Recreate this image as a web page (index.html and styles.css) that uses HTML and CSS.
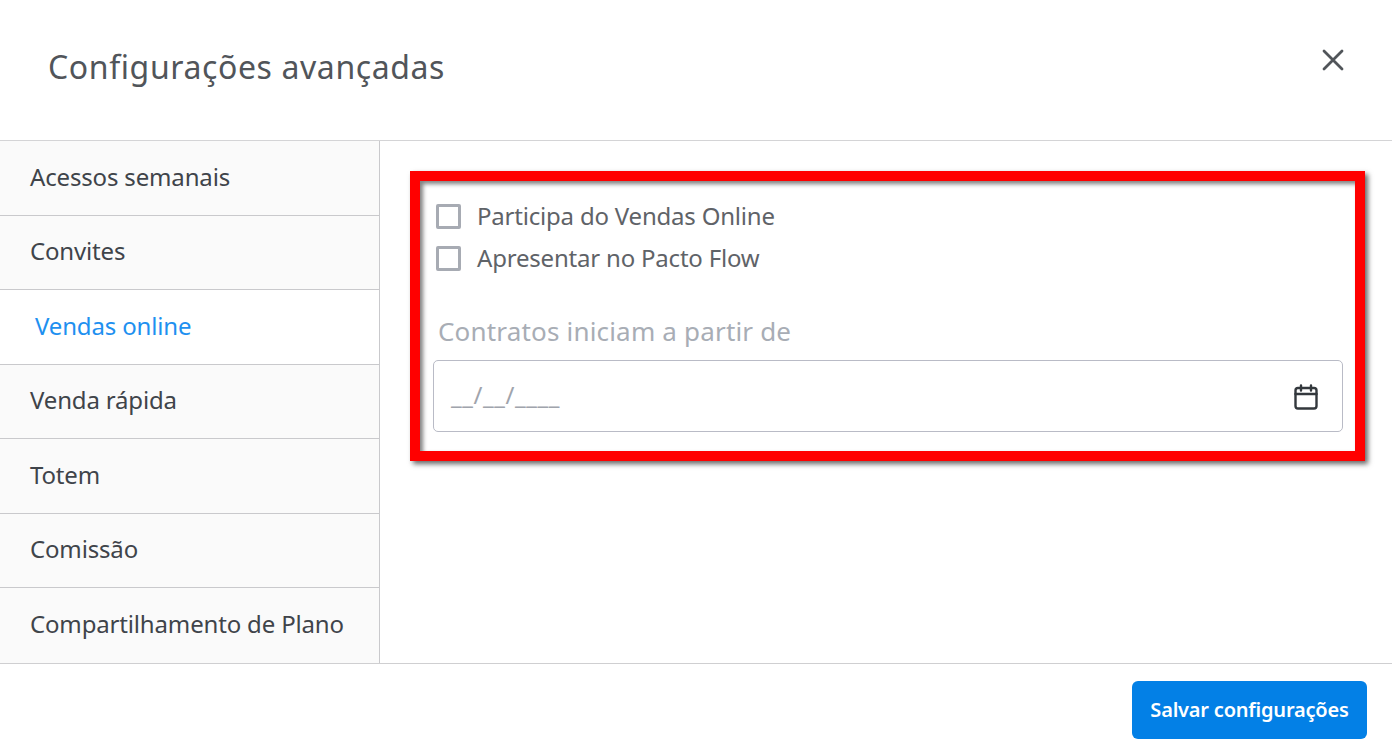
FILE: index.html
```html
<!DOCTYPE html>
<html lang="pt-BR">
<head>
    <meta charset="UTF-8">
    <meta name="viewport" content="width=device-width, initial-scale=1.0">
    <title>Configurações avançadas</title>
    <link rel="stylesheet" href="styles.css">
</head>
<body>
    <div class="modal">
        <header class="modal-header">
            <h1>Configurações avançadas</h1>
            <button class="close-btn" aria-label="Fechar">
                <svg width="24" height="24" viewBox="0 0 24 24" fill="none" stroke="#51555a" stroke-width="2.8" stroke-linecap="round">
                    <path d="M3 3 L21 21 M21 3 L3 21"/>
                </svg>
            </button>
        </header>

        <div class="modal-body">
            <!-- Menu lateral -->
            <nav class="side-menu">
                <a class="menu-item">Acessos semanais</a>
                <a class="menu-item">Convites</a>
                <a class="menu-item active">Vendas online</a>
                <a class="menu-item">Venda rápida</a>
                <a class="menu-item">Totem</a>
                <a class="menu-item">Comissão</a>
                <a class="menu-item">Compartilhamento de Plano</a>
            </nav>

            <section class="content">
                <div class="highlight">
                    <label class="check-row">
                        <span class="check-box"></span>
                        <span class="check-text">Participa do Vendas Online</span>
                    </label>
                    <label class="check-row">
                        <span class="check-box"></span>
                        <span class="check-text">Apresentar no Pacto Flow</span>
                    </label>

                    <div class="field-label">Contratos iniciam a partir de</div>
                    <div class="date-input">
                        <span class="date-mask">__/__/____</span>
                        <svg class="date-icon" width="26" height="26" viewBox="0 0 26 26" fill="none" stroke="#33383d" stroke-width="2.4" stroke-linecap="round" stroke-linejoin="round">
                            <rect x="2.5" y="4" width="21" height="20.5" rx="2.5"/>
                            <path d="M2.5 10 H23.5 M8 1.5 V6.5 M18 1.5 V6.5"/>
                        </svg>
                    </div>
                </div>
            </section>
        </div>

        <footer class="modal-footer">
            <button class="save-btn">Salvar configurações</button>
        </footer>
    </div>
</body>
</html>
```

FILE: styles.css
```css
* {
    box-sizing: border-box;
}
html, body {
    height: 100%;
}
body {
    margin: 0;
    background: #fff;
    font-family: "Noto Sans", "Open Sans", sans-serif;
    overflow: hidden;
}
.modal {
    height: 752px;
    display: flex;
    flex-direction: column;
}
.modal-header {
    height: 141px;
    flex: none;
    border-bottom: 1px solid #d4d4d6;
    display: flex;
    justify-content: space-between;
    padding: 47px 47px 0 48px;
}
.modal-header h1 {
    margin: 0;
    font-size: 32px;
    line-height: 40px;
    font-weight: 400;
    color: #51555a;
    letter-spacing: 0.6px;
}
.close-btn {
    width: 24px;
    height: 24px;
    padding: 0;
    margin-top: 1px;
    border: none;
    background: none;
    cursor: pointer;
}
.modal-body {
    height: 522px;
    flex: none;
    display: flex;
}
.side-menu {
    width: 380px;
    flex: none;
    background: #fafafa;
    border-right: 1px solid #c9c9cc;
}
.menu-item {
    display: flex;
    align-items: center;
    height: 74.5px;
    padding: 0 0 3px 30px;
    font-size: 24px;
    letter-spacing: -0.16px;
    color: #3f444a;
    border-bottom: 1px solid #c9c9cc;
}
.menu-item:last-child {
    border-bottom: none;
}
.menu-item.active {
    padding-left: 35px;
    background: #fff;
    color: #1e90f0;
}
.content {
    flex: 1;
    padding: 30px 27px 0 30px;
}
.highlight {
    height: 290px;
    border: 10px solid #f00;
    box-shadow: 3px 3px 5px rgba(0, 0, 0, 0.6), inset 3px 3px 4px rgba(0, 0, 0, 0.5);
    padding: 23px 12px 0 13px;
}
.check-row {
    display: flex;
    align-items: center;
    gap: 16px;
    height: 25px;
    margin: 0 0 17px 3px;
    font-size: 24px;
    letter-spacing: -0.2px;
    color: #5f6368;
}
.check-text {
    margin-top: -2px;
}
.check-box {
    width: 25px;
    height: 25px;
    flex: none;
    background: #fff;
    border: 3px solid #a7abb3;
    border-radius: 2px;
}
.field-label {
    margin: 43px 0 12px 5px;
    font-size: 26px;
    line-height: 34px;
    letter-spacing: 0.18px;
    color: #a8adb5;
}
.date-input {
    height: 72px;
    display: flex;
    align-items: center;
    justify-content: space-between;
    padding: 0 23px 0 17px;
    border: 1px solid #b9bbc6;
    border-radius: 5px;
    background: #fff;
}
.date-mask {
    margin-top: -3px;
    font-size: 24px;
    letter-spacing: 0.6px;
    color: #a0a4ac;
}
.date-icon {
    margin-top: 2px;
}
.modal-footer {
    flex: 1;
    border-top: 1px solid #cfcfd1;
    display: flex;
    justify-content: flex-end;
    padding: 17px 25px 0 0;
}
.save-btn {
    width: 235px;
    height: 58px;
    padding: 0 0 2px;
    border: none;
    border-radius: 6px;
    background: #0380e6;
    color: #fff;
    font-family: inherit;
    font-size: 20px;
    font-weight: 600;
    letter-spacing: -0.2px;
    cursor: pointer;
}
```
